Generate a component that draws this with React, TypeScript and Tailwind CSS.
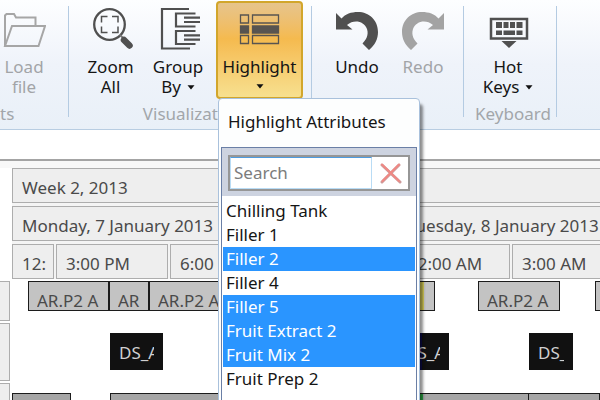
import { useState } from "react";
import type { ReactNode } from "react";

const font = "font-['Noto_Sans','Open_Sans',sans-serif]";

function Caret() {
  return (
    <svg width="8" height="5" viewBox="0 0 8 5" className="shrink-0" aria-hidden="true">
      <path d="M0.5 0.3h7L4 4.6z" fill="#111" />
    </svg>
  );
}

function FolderIcon() {
  return (
    <svg width="44" height="44" viewBox="0 1 44 44" fill="none" stroke="#a6a6a6" strokeWidth="2" aria-hidden="true">
      <path d="M3 39V8.500L4.500 7H12l2 3.500h19.500V18" />
      <path d="M3 39L10 19h33l-6.500 20z" />
    </svg>
  );
}

function ZoomIcon() {
  return (
    <svg width="44" height="44" viewBox="0 0 44 44" fill="none" aria-hidden="true">
      <circle cx="20.500" cy="16.500" r="15.300" stroke="#505050" strokeWidth="2.300" />
      <path d="M12.500 14.500v-6h6M23 8.500h6v6M29 18.500v6h-6M18.500 24.500h-6v-6" stroke="#505050" strokeWidth="1.500" />
      <path d="M31 27l4 4" stroke="#777" strokeWidth="2" />
      <path d="M35 32l5.500 5.500" stroke="#505050" strokeWidth="6.500" strokeLinecap="round" />
    </svg>
  );
}

function GroupIcon() {
  return (
    <svg width="44" height="44" viewBox="0 0 44 44" fill="none" stroke="#505050" strokeWidth="2.200" aria-hidden="true">
      <path d="M33 1H6v39.500h28" />
      <path d="M39.500 5.500H20V18.500H39.500M39.500 23H20v13H39.500" />
      <path d="M28 9.700h16M28 14h16M28 27.300h16M28 31.600h16" />
    </svg>
  );
}

function HighlightIcon() {
  return (
    <svg width="44" height="44" viewBox="0 0 44 44" fill="none" stroke="#585450" strokeWidth="1.300" aria-hidden="true">
      <path d="M2.500 7h8v8h-8zM14.500 7h26v8h-26zM2.500 27.500h8v8h-8zM14.500 27.500h26v8h-26z" />
      <path d="M2.500 18h8v7h-8zM14.500 18h26v7h-26z" fill="#585450" />
    </svg>
  );
}

function CurvedArrow({ color, flipped }: { color: string; flipped?: boolean }) {
  return (
    <svg width="44" height="44" viewBox="0 0 44 44" className={flipped ? "-scale-x-100" : ""} aria-hidden="true">
      <path d="M1 5v16.500h16.500L12 17C19 11 29 13 32 21C34 27 31 32 27.500 35.500L34 42C40 37 43 31 43 24C43 12 34 4 23 4C16 4 10.500 6 6.500 10.500z" fill={color} />
    </svg>
  );
}

function KeyboardIcon() {
  return (
    <svg width="44" height="44" viewBox="0 0 44 44" aria-hidden="true">
      <path d="M5 11h36v19.500H5z" fill="#f7f9fc" stroke="#505050" strokeWidth="2.500" />
      <path d="M10 14h6v6h-6zM17.500 14h5v6h-5zM24 14h5v6h-5zM30.500 14h6v6h-6zM10 22.500h6V27h-6zM17.500 22.500H29V27H17.500zM30.500 22.500h6V27h-6z" fill="#505050" />
      <path d="M15.500 33h15L23 40z" fill="#505050" />
    </svg>
  );
}

type RibbonButtonProps = {
  icon: ReactNode;
  lines: [string, string?];
  width: string;
  caret?: boolean;
  disabled?: boolean;
};

function RibbonButton({ icon, lines, width, caret, disabled }: RibbonButtonProps) {
  return (
    <button
      type="button"
      disabled={disabled}
      className={`flex shrink-0 flex-col items-center pt-2 leading-5 ${width} ${disabled ? "text-[#a2a4a7]" : "text-[#151515]"}`}
    >
      {icon}
      <span className="mt-1 pt-px">{lines[0]}</span>
      {lines[1] && (
        <span className="flex items-center gap-1.5">
          {lines[1]}
          {caret && <Caret />}
        </span>
      )}
    </button>
  );
}

function RibbonGroup({ label, width, children }: { label: string; width: string; children: ReactNode }) {
  return (
    <section className={`flex shrink-0 flex-col ${width}`}>
      <div className="flex h-[99px]">{children}</div>
      <h2 className="flex h-[30px] justify-center pt-[3px] pl-1.5 leading-6 text-[#a2a6aa]">{label}</h2>
    </section>
  );
}

function Divider() {
  return <div className="mt-1.5 mb-3 w-px shrink-0 bg-[#b4cbe2]" />;
}

const attributes = ["Chilling Tank", "Filler 1", "Filler 2", "Filler 4", "Filler 5", "Fruit Extract 2", "Fruit Mix 2", "Fruit Prep 2"];

function HighlightMenu() {
  const [selected, setSelected] = useState(["Filler 2", "Filler 5", "Fruit Extract 2", "Fruit Mix 2"]);
  const [query, setQuery] = useState("");
  const toggle = (name: string) =>
    setSelected((s) => (s.includes(name) ? s.filter((n) => n !== name) : [...s, name]));

  return (
    <div className="absolute top-[97px] left-0.5 z-10 w-[202px] rounded-t border border-[#a9c1dc] bg-[#fdfefe] px-0.5 text-[#151515] shadow-[3px_6px_3px_rgba(0,0,0,0.45)]">
      <h3 className="h-12 px-[7px] leading-[46px]">Highlight Attributes</h3>
      <div className="border border-[#6a7fa6] bg-white">
        <div className="bg-[#cdd3e0] px-1.5 pt-[7px] pb-[5px]">
          <div className="flex h-9 border-2 border-[#969696] bg-white">
            <input
              aria-label="Search"
              placeholder="Search"
              value={query}
              onChange={(e) => setQuery(e.target.value)}
              className="min-w-0 flex-1 border border-[#b9dcf5] border-t-[#4e9ce0] px-[3px] outline-none placeholder:text-[#7c7c7c]"
            />
            <button type="button" aria-label="Clear search" onClick={() => setQuery("")} className="flex w-9 items-center justify-center">
              <svg width="24" height="24" viewBox="0 0 24 24" fill="none" strokeLinecap="round" aria-hidden="true">
                <path d="M4 4l18 17M21 4L4 21" stroke="#cd9a9a" strokeWidth="3" />
                <path d="M4 3.500l17 16.500M21 3.500L4.500 20" stroke="#f08883" strokeWidth="1.800" />
              </svg>
            </button>
          </div>
        </div>
        <ul className="h-80 px-px pt-[3px]">
          {attributes
            .filter((a) => a.toLowerCase().includes(query.toLowerCase()))
            .map((a) => (
              <li key={a}>
                <button
                  type="button"
                  aria-pressed={selected.includes(a)}
                  onClick={() => toggle(a)}
                  className={`block h-6 w-full px-[3px] text-left leading-6 ${selected.includes(a) ? "bg-[#2a95ff] text-white" : ""}`}
                >
                  {a}
                </button>
              </li>
            ))}
        </ul>
      </div>
    </div>
  );
}

function HeaderCell({ children, width }: { children?: ReactNode; width: string }) {
  return (
    <div className={`h-[35px] border border-[#adadad] bg-[#eeeeee] pt-[5px] pl-[9px] leading-7 whitespace-nowrap ${width}`}>
      {children}
    </div>
  );
}

function Task({ children, className }: { children?: ReactNode; className: string }) {
  return (
    <div className={`h-[30px] shrink-0 border border-[#1c1c1c] px-2 pt-[7px] text-[#4a4a4a] ${className}`}>
      <div className="h-[21px] overflow-hidden leading-6 whitespace-nowrap">{children}</div>
    </div>
  );
}

function BlackTask({ children, className }: { children?: ReactNode; className: string }) {
  return (
    <div className={`h-[37px] shrink-0 px-[9px] pt-2 text-[#d0d0d0] ${className}`}>
      <div className="overflow-hidden leading-6 whitespace-nowrap">{children}</div>
    </div>
  );
}

const hours = ["3:00 PM", "6:00 PM", "9:00 PM", "12:00 AM", "3:00 AM"];

function Timeline() {
  return (
    <main className="flex flex-1 flex-col text-[#4a4a4a]">
      <div className="h-[7px] bg-[#f8f8f8]" />
      <div className="ml-3 flex flex-col gap-[3px] bg-[#f4f4f4]">
        <HeaderCell width="w-full border-r-0">Week 2, 2013</HeaderCell>
        <div className="flex gap-0.5">
          <HeaderCell width="w-[383px] shrink-0">Monday, 7 January 2013</HeaderCell>
          <HeaderCell width="flex-1 border-r-0">Tuesday, 8 January 2013</HeaderCell>
        </div>
        <div className="flex gap-0.5 overflow-hidden">
          <HeaderCell width="w-[42px] shrink-0">12:</HeaderCell>
          {hours.map((h) => (
            <HeaderCell key={h} width="w-[112px] shrink-0">{h}</HeaderCell>
          ))}
        </div>
      </div>
      <div className="mt-0.5 flex flex-1 overflow-hidden">
        <div className="flex w-2.5 shrink-0 flex-col gap-0.5">
          <div className="h-10 border border-l-0 border-[#adadad] bg-[#eeeeee]" />
          <div className="h-[58px] border border-l-0 border-[#adadad] bg-[#eeeeee]" />
          <div className="flex-1 border border-b-0 border-l-0 border-[#adadad] bg-[#eeeeee]" />
        </div>
        <div className="flex min-w-0 flex-1 flex-col">
          <div className="flex h-[52px]">
            <Task className="ml-[18px] w-[81px] bg-[#c3c3c3]">AR.P2 A</Task>
            <Task className="w-10 bg-[#c3c3c3]">AR</Task>
            <Task className="w-[81px] bg-[#c3c3c3]">AR.P2 A</Task>
            <Task className="ml-[104px] w-[101px] bg-linear-to-r from-[#d8ce5a] from-90% to-[#c3c3c3] to-90%" />
            <Task className="ml-[43px] w-[82px] bg-[#c3c3c3]">AR.P2 A</Task>
            <Task className="ml-[35px] w-20 bg-[#c3c3c3]" />
          </div>
          <div className="flex h-[60px]">
            <BlackTask className="ml-[100px] w-[53px] bg-[#111]">DS_A</BlackTask>
            <BlackTask className="ml-[233px] w-[53px] bg-linear-to-r from-[#0b0b4a] from-50% to-[#111] to-50%">DS_A</BlackTask>
            <BlackTask className="ml-20 w-11 bg-[#111]">DS_</BlackTask>
          </div>
          <div className="flex h-10">
            <Task className="ml-0.5 w-[59px] bg-[#a6a6a6]" />
            <Task className="ml-[39px] w-[200px] bg-[#a6a6a6]" />
            <Task className="w-[113px] border-r-0 bg-[#2fae49]" />
            <Task className="w-[106px] border-l-0 bg-[#a6a6a6]" />
            <Task className="flex-1 border-l-0 bg-[#a6a6a6]" />
          </div>
        </div>
      </div>
    </main>
  );
}

export default function App() {
  return (
    <div className={`flex h-screen flex-col overflow-hidden bg-white text-[17px] ${font}`}>
      <header className="flex h-[130px] shrink-0 border-b border-[#b8cde2] bg-linear-to-b from-[#fdfeff] via-[#eff3fa] to-[#e9f0f8]">
        <section className="flex w-[68px] shrink-0 flex-col">
          <div className="flex h-[99px]">
            <RibbonButton icon={<FolderIcon />} lines={["Load", "file"]} width="w-12" disabled />
          </div>
          <h2 className="pt-[3px] leading-6 text-[#a2a6aa]">ts</h2>
        </section>
        <Divider />
        <RibbonGroup label="Visualization" width="w-[242px]">
          <RibbonButton icon={<ZoomIcon />} lines={["Zoom", "All"]} width="ml-2 w-[67px]" />
          <RibbonButton icon={<GroupIcon />} lines={["Group", "By"]} width="w-[68px]" caret />
          <div className="relative mt-px ml-1">
            <button
              type="button"
              aria-expanded="true"
              className="flex h-[98px] w-[87px] flex-col items-center rounded border-2 border-[#d2a62b] bg-linear-to-b from-[#e6c48c] via-[#f5ba4e] via-38% to-[#f7e08f] pt-[5px] leading-5 text-[#151515]"
            >
              <HighlightIcon />
              <span className="mt-1 mb-[7px] pt-px">Highlight</span>
              <Caret />
            </button>
            <HighlightMenu />
          </div>
        </RibbonGroup>
        <Divider />
        <section className="flex w-[151px] shrink-0 pl-3">
          <RibbonButton icon={<CurvedArrow color="#505050" />} lines={["Undo"]} width="w-[66px]" />
          <RibbonButton icon={<CurvedArrow color="#a3a3a3" flipped />} lines={["Redo"]} width="w-[66px]" disabled />
        </section>
        <Divider />
        <RibbonGroup label="Keyboard" width="w-[92px]">
          <RibbonButton icon={<KeyboardIcon />} lines={["Hot", "Keys"]} width="w-[88px]" caret />
        </RibbonGroup>
        <Divider />
      </header>
      <div className="h-[31px] shrink-0 border-b-2 border-[#a4a4a4]" />
      <Timeline />
    </div>
  );
}
